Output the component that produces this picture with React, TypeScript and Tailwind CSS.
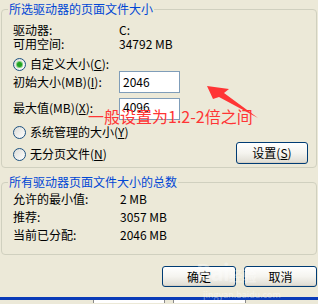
import React from "react";

function Radio({ checked = false }: { checked?: boolean }) {
  return (
    <span className="w-[13px] h-[13px] shrink-0 rounded-full border border-[#1C5180] bg-linear-to-br from-[#DCDCD7] to-white flex items-center justify-center">
      {checked && <span className="w-[5px] h-[5px] rounded-full bg-[#21A121] shadow-[0_0_0_1px_#7FD07F]" />}
    </span>
  );
}

function XPButton({ children, className = "" }: { children: React.ReactNode; className?: string }) {
  return (
    <div
      className={
        "flex items-center justify-center rounded-[3px] border border-[#003C74] bg-linear-to-b from-white via-[#F5F4EF] to-[#DEDCD2] shadow-[inset_0_-1px_0_#D6D0C5] " +
        className
      }
    >
      {children}
    </div>
  );
}

export default function App() {
  return (
    <div className="relative w-[318px] h-[304px] overflow-hidden bg-[#ECE9D8] text-[12px] leading-[14px] text-black font-['Noto_Sans_CJK_SC','Noto_Sans',sans-serif]">
      {/* Group 1 */}
      <fieldset className="mt-[2px] ml-[1px] w-[316px] border border-[#D0D0BF] rounded-[4px] p-0 pb-[3px]">
        <legend className="ml-[6px] px-[1px] text-[#0046D5] leading-[14px]">所选驱动器的页面文件大小</legend>
        <div className="pl-[11px] flex flex-col">
          <div className="mt-[7px] h-[14px] flex items-center">
            <span className="w-[106px]">驱动器:</span>
            <span>C:</span>
          </div>
          <div className="h-[14px] flex items-center">
            <span className="w-[106px]">可用空间:</span>
            <span>34792 MB</span>
          </div>
          <div className="mt-[6px] h-[14px] flex items-center gap-[4px]">
            <Radio checked />
            <span>
              自定义大小(<u>C</u>):
            </span>
          </div>
          <div className="h-[22px] flex items-center">
            <span className="w-[106px]">
              初始大小(MB)(<u>I</u>):
            </span>
            <div className="w-[61px] h-[22px] border border-[#7F9DB9] bg-white pl-[3px] pt-[3px]">2046</div>
          </div>
          <div className="mt-[5px] h-[22px] flex items-center">
            <span className="w-[106px] -mt-[3px]">
              最大值(MB)(<u>X</u>):
            </span>
            <div className="w-[61px] h-[22px] border border-[#7F9DB9] bg-white pl-[3px] pt-[1px]">4096</div>
          </div>
          <div className="mt-[5px] h-[14px] flex items-center gap-[4px]">
            <Radio />
            <span>
              系统管理的大小(<u>Y</u>)
            </span>
          </div>
          <div className="mt-[3px] h-[22px] flex items-center justify-between pr-[8px]">
            <div className="flex items-center gap-[4px] mt-[2px]">
              <Radio />
              <span>
                无分页文件(<u>N</u>)
              </span>
            </div>
            <XPButton className="w-[72px] h-[22px]">
              <span>
                设置(<u>S</u>)
              </span>
            </XPButton>
          </div>
        </div>
      </fieldset>

      {/* Group 2 */}
      <fieldset className="mt-[7px] ml-[1px] w-[316px] border border-[#D0D0BF] rounded-[4px] p-0 pb-[12px]">
        <legend className="ml-[6px] px-[1px] text-[#0046D5] leading-[14px]">所有驱动器页面文件大小的总数</legend>
        <div className="pl-[11px] flex flex-col">
          <div className="mt-[3px] h-[14px] flex items-center">
            <span className="w-[107px]">允许的最小值:</span>
            <span>2 MB</span>
          </div>
          <div className="mt-[4px] h-[14px] flex items-center">
            <span className="w-[107px]">推荐:</span>
            <span>3057 MB</span>
          </div>
          <div className="mt-[4px] h-[14px] flex items-center">
            <span className="w-[107px]">当前已分配:</span>
            <span>2046 MB</span>
          </div>
        </div>
      </fieldset>

      {/* Buttons */}
      <div className="mt-[11px] flex justify-end gap-[8px] pr-[1px]">
        <XPButton className="w-[74px] h-[21px]">确定</XPButton>
        <XPButton className="w-[73px] h-[21px]">取消</XPButton>
      </div>

      {/* bottom strip */}
      <div className="mt-[10px] h-[3px] bg-[#0A3BB8]" />
      <div className="h-[3px] flex bg-[#ECE9D8]">
        <div className="w-[93px]" />
        <div className="w-[72px] bg-white border-l border-r border-[#8A8A8A]" />
        <div className="w-[8px]" />
        <div className="w-[73px] bg-white border-l border-r border-[#8A8A8A]" />
      </div>

      {/* Red annotation */}
      <div className="absolute left-[88px] top-[106px] text-[16px] leading-[20px] text-[#FF3535] whitespace-nowrap">
        一般设置为1.2-2倍之间
      </div>
      <svg className="absolute left-0 top-0" width="318" height="304" viewBox="0 0 318 304">
        <polygon points="207,86 229,89 224,93 258,118 219,97 213,99" fill="#FF3535" />
      </svg>

      {/* watermark */}
      <div className="absolute left-[196px] top-[258px] text-[22px] leading-[26px] font-bold text-white/35 whitespace-nowrap tracking-tight">
        Bai<span className="text-[14px] align-middle">经验</span>
      </div>
      <div className="absolute left-[203px] top-[290px] text-[9px] leading-[9px] text-white/45 whitespace-nowrap">
        jingyan.baidu.com
      </div>
    </div>
  );
}
